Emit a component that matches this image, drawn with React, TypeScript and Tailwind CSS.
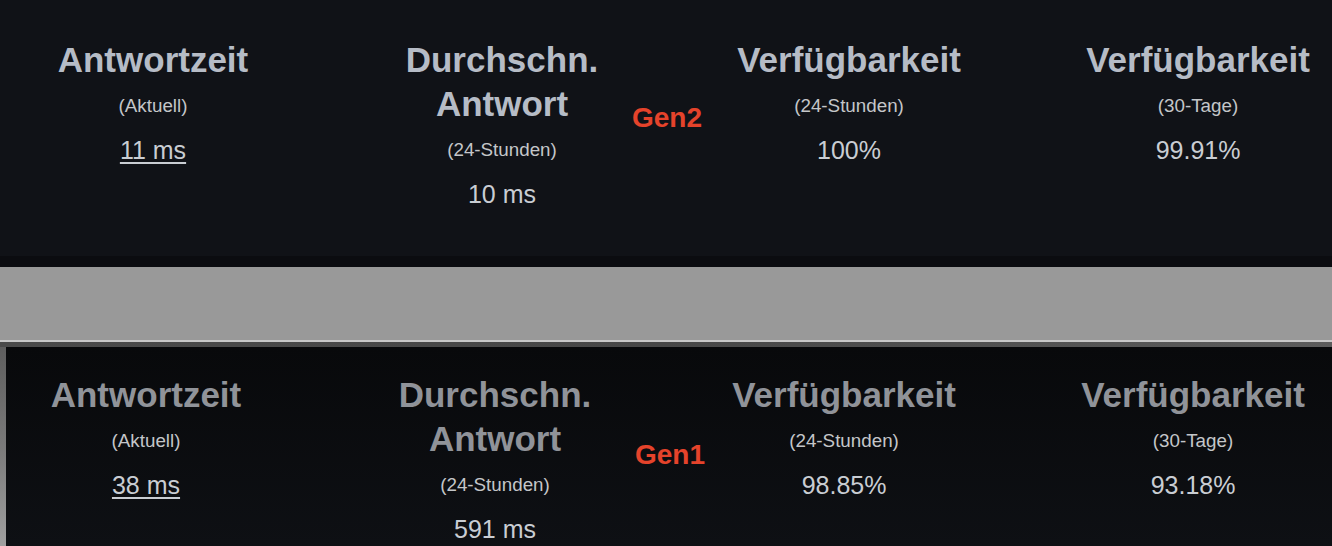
import React from 'react';

interface StatProps {
  title: string[];
  sub: string;
  value: string;
  link?: boolean;
  dim?: boolean;
  className?: string;
}

function Stat({ title, sub, value, link, dim, className = '' }: StatProps) {
  return (
    <div className={`w-[260px] shrink-0 flex flex-col items-center text-center ${className}`}>
      <div className={`text-[35px] leading-[44px] font-bold ${dim ? 'text-[#909399]' : 'text-[#b6bcc6]'}`}>
        {title.map((t) => (
          <div key={t}>{t}</div>
        ))}
      </div>
      <div className="mt-[12px] text-[18.8px] leading-[24px] text-[#c4c6c9]">{sub}</div>
      <div
        className={`mt-[16px] text-[25px] leading-[32px] text-[#c9cdd3] ${
          link ? 'underline decoration-[1.5px] underline-offset-[3px]' : ''
        }`}
      >
        {value}
      </div>
    </div>
  );
}

function GenLabel({ label, className = '' }: { label: string; className?: string }) {
  return (
    <div className={`shrink-0 self-start text-[28px] leading-[32px] font-bold text-[#e5432b] ${className}`}>
      {label}
    </div>
  );
}

export default function App() {
  return (
    <div className="w-[1332px] h-[546px] overflow-hidden flex flex-col bg-[#999999] font-['Liberation_Sans',Arial,sans-serif]">
      {/* Gen2 panel */}
      <div className="h-[256px] shrink-0 bg-[#101217] flex items-start pt-[38px] pl-[23px]">
        <Stat title={['Antwortzeit']} sub="(Aktuell)" value="11 ms" link />
        <Stat title={['Durchschn.', 'Antwort']} sub="(24-Stunden)" value="10 ms" className="ml-[89px]" />
        <GenLabel label="Gen2" className="mt-[64px]" />
        <Stat title={['Verfügbarkeit']} sub="(24-Stunden)" value="100%" className="ml-[17px]" />
        <Stat title={['Verfügbarkeit']} sub="(30-Tage)" value="99.91%" className="ml-[89px]" />
      </div>
      <div className="h-[11px] shrink-0 bg-[#0b0c10]" />

      {/* spacer */}
      <div className="h-[73px] shrink-0 bg-[#999999]" />
      <div className="h-[2px] shrink-0 bg-[#c8c8c8]" />
      <div className="h-[5px] shrink-0 bg-gradient-to-r from-[#4a4a4a] via-[#474747] to-[#5c5c5c]" />

      {/* Gen1 panel */}
      <div className="flex-1 flex">
        <div className="w-[6px] shrink-0 bg-gradient-to-b from-[#5e5e5e] via-[#7a7a7a] to-[#a0a0a0]" />
        <div className="flex-1 bg-gradient-to-b from-[#08090b] to-[#0e1014] flex items-start pt-[26px] pl-[10px]">
          <Stat title={['Antwortzeit']} sub="(Aktuell)" value="38 ms" link dim />
          <Stat title={['Durchschn.', 'Antwort']} sub="(24-Stunden)" value="591 ms" dim className="ml-[89px]" />
          <GenLabel label="Gen1" className="mt-[66px] ml-[10px]" />
          <Stat title={['Verfügbarkeit']} sub="(24-Stunden)" value="98.85%" dim className="ml-[9px]" />
          <Stat title={['Verfügbarkeit']} sub="(30-Tage)" value="93.18%" dim className="ml-[89px]" />
        </div>
      </div>
    </div>
  );
}
